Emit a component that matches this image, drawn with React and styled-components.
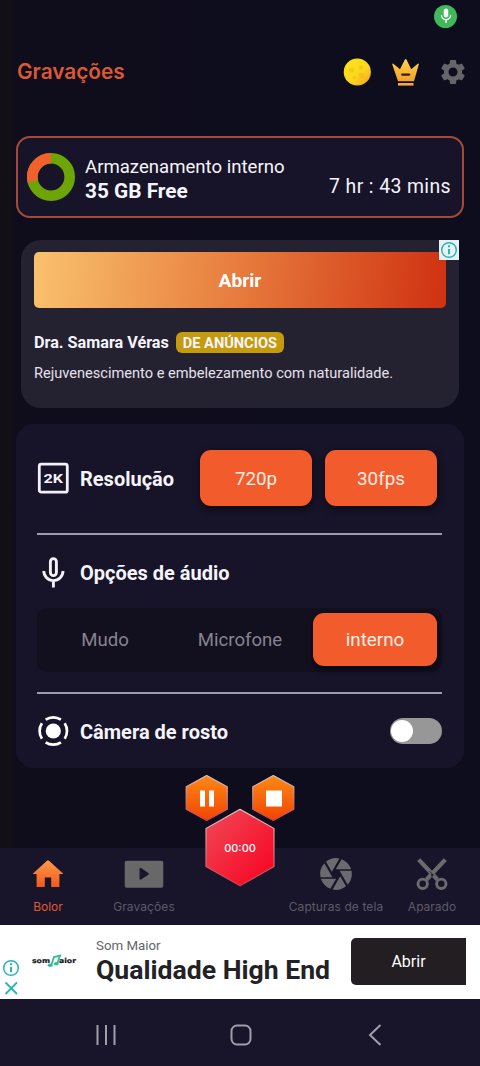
import React from "react";
import styled, { createGlobalStyle } from "styled-components";
import { MdSettings, MdMic, MdCamera } from "react-icons/md";

const Global = createGlobalStyle`
  * { box-sizing: border-box; }
  body { margin: 0; background: #0f0d1c; }
  button { border: 0; padding: 0; font: inherit; color: inherit; background: none; }
`;

const Screen = styled.div`
  width: 480px;
  height: 1066px;
  display: flex;
  flex-direction: column;
  overflow: hidden;
  color: #f6f4fb;
  background: linear-gradient(90deg, #120f17 0, #120f17 10px, #0f0d1c 18px, #0e0d1d 100%);
  font-family: Roboto, "Liberation Sans", sans-serif;
`;

const StatusBar = styled.div`
  height: 32px;
  display: flex;
  justify-content: flex-end;
  align-items: center;
  padding-right: 23px;
`;

const MicBadge = styled.span`
  width: 23px;
  height: 23px;
  border-radius: 50%;
  display: flex;
  align-items: center;
  justify-content: center;
  background: #40b95a;
  color: #fff;
`;

const Header = styled.header`
  height: 80px;
  display: flex;
  align-items: center;
  justify-content: space-between;
  padding: 0 12px 0 17px;
`;

const Title = styled.h1`
  margin: 0;
  font: 600 20.8px/28px Inter, "Liberation Sans", sans-serif;
  color: #db5932;
`;

const HeaderActions = styled.div`
  display: flex;
  align-items: center;
  gap: 18px;
  svg { display: block; }
`;

const StorageCard = styled.section`
  height: 82px;
  margin: 24px 16px 0;
  padding: 0 11px 0 9px;
  border: 2px solid #a54a38;
  border-radius: 14px;
  background: #171429;
  display: flex;
  align-items: center;
`;

const StorageText = styled.div`
  flex: 1;
  margin-left: 10px;
  padding-top: 3px;
  font-size: 18.6px;
  line-height: 24px;
  white-space: nowrap;
  strong { display: block; font-size: 20.8px; }
`;

const TimeLeft = styled.div`
  padding-top: 19px;
  font-size: 19.4px;
  letter-spacing: 0.4px;
  white-space: nowrap;
`;

const AdCard = styled.section`
  position: relative;
  height: 168px;
  margin: 22px 21px 0;
  padding: 12px 13px;
  border-radius: 20px;
  background: #242131;
`;

const AdButton = styled.button`
  display: block;
  width: 100%;
  height: 56px;
  padding-top: 1px;
  border-radius: 5px;
  background: linear-gradient(97deg, #f9c26d 0%, #e77b3d 50%, #d03413 98%);
  font-size: 19.2px;
  font-weight: 700;
  color: #fff;
`;

const AdTitle = styled.div`
  display: flex;
  align-items: center;
  gap: 7px;
  height: 20px;
  margin-top: 24px;
  font-size: 16.2px;
  font-weight: 700;
  white-space: nowrap;
`;

const AdTag = styled.span`
  width: 108px;
  height: 21px;
  line-height: 22px;
  border-radius: 6px;
  background: #c59a0c;
  text-align: center;
  font-size: 14.6px;
`;

const AdText = styled.p`
  margin: 11px 0 0;
  font-size: 14.6px;
  line-height: 20px;
  color: #e4e1ec;
  white-space: nowrap;
`;

const AdCorner = styled.span`
  position: absolute;
  top: 0;
  right: 0;
  width: 20px;
  height: 20px;
  background: #e9f2f3;
  svg { display: block; }
`;

const Settings = styled.section`
  height: 344px;
  margin: 16px 16px 0;
  padding: 26px 22px 0 21px;
  border-radius: 18px;
  background: #171328;
`;

const SettingRow = styled.div`
  display: flex;
  align-items: center;
  height: ${(p) => p.$height}px;
`;

const IconSlot = styled.span`
  width: 32px;
  margin-right: 11px;
  flex: none;
  display: flex;
  justify-content: center;
  svg { display: block; flex: none; }
`;

const Label = styled.span`
  flex: 1;
  padding-top: 2px;
  font-size: 20px;
  font-weight: 700;
  white-space: nowrap;
`;

const Choice = styled.button`
  width: ${(p) => p.$width}px;
  height: ${(p) => p.$height}px;
  margin-right: ${(p) => p.$gap}px;
  padding-top: 2px;
  flex: none;
  border-radius: 11px;
  background: #f25c2d;
  color: #ffeee6;
  font-size: 18.8px;
  box-shadow: 1px 3px 7px rgba(0, 0, 0, 0.55);
`;

const Divider = styled.hr`
  height: 2px;
  margin: ${(p) => p.$top}px 0 0;
  border: 0;
  background: #a09ab0;
`;

const Segments = styled.div`
  height: 64px;
  display: flex;
  align-items: center;
  padding-bottom: 2px;
  border-radius: 10px;
  background: #120f1f;
  ${Choice} { margin-left: auto; }
`;

const Segment = styled.button`
  width: ${(p) => p.$width}px;
  flex: none;
  padding-top: 2px;
  font-size: 18.6px;
  color: #87838f;
`;

const Toggle = styled.span`
  width: 52px;
  height: 26px;
  padding: 2px 1px;
  border-radius: 13px;
  background: #979797;
  &::before {
    content: "";
    display: block;
    width: 22px;
    height: 22px;
    border-radius: 50%;
    background: #fff;
  }
`;

const Nav = styled.nav`
  position: relative;
  height: 77px;
  margin-top: 80px;
  display: grid;
  grid-template-columns: repeat(5, 96px);
  background: #181429;
`;

const NavItem = styled.div`
  display: flex;
  flex-direction: column;
  align-items: center;
  padding-top: 9px;
  font: 400 12px/16px Inter, "Liberation Sans", sans-serif;
  letter-spacing: ${(p) => p.$spacing || 0}px;
  white-space: nowrap;
  color: ${(p) => (p.$active ? "#e2582f" : "#5d5a68")};
`;

const NavIcon = styled.span`
  height: 34px;
  margin-bottom: 8px;
  display: flex;
  align-items: center;
  color: #6b6a6f;
  svg { display: block; flex: none; }
`;

const Recorder = styled.div`
  position: absolute;
  left: 184px;
  top: -75px;
  width: 112px;
  height: 114px;
  svg { display: block; }
`;

const Timer = styled.span`
  position: absolute;
  left: 0;
  right: 0;
  top: 67px;
  text-align: center;
  font: 500 11px/16px Inter, sans-serif;
  color: #fff;
`;

const Banner = styled.section`
  height: 74px;
  display: flex;
  align-items: center;
  background: #fff;
  color: #25222a;
`;

const BannerMarks = styled.div`
  width: 22px;
  height: 74px;
  padding: 33px 0 0 1px;
  svg { display: block; }
`;

const BannerLogo = styled.div`
  width: 74px;
  padding: 0 0 2px 9px;
  svg { display: block; }
`;

const BannerText = styled.div`
  flex: 1;
  padding-bottom: 2px;
  white-space: nowrap;
  font-size: 13.3px;
  line-height: 18px;
  color: #66636a;
  strong {
    display: block;
    font-size: 26.6px;
    line-height: 30px;
    color: #222126;
  }
`;

const BannerButton = styled.button`
  width: 115px;
  height: 47px;
  margin: 0 14px 1px 0;
  border-radius: 5px 0 0 5px;
  background: #231e21;
  color: #fff;
  font-size: 16px;
`;

const SystemBar = styled.footer`
  flex: 1;
  display: flex;
  align-items: center;
  justify-content: space-between;
  padding: 4px 94px 0 95px;
  background: #181429;
  svg { display: block; }
`;

const Stroke = ({ w, h, color = "currentColor", width = 2, children }) => (
  <svg width={w} height={h} viewBox={`0 0 ${w} ${h}`} fill="none" stroke={color} strokeWidth={width}>
    {children}
  </svg>
);

const InfoIcon = () => (
  <svg width="20" height="20" viewBox="0 0 20 20">
    <circle cx="10" cy="10" r="7.3" fill="none" stroke="#29b5b8" strokeWidth="1.5" />
    <path d="M10 9v5.2M10 5.3v2" stroke="#29b5b8" strokeWidth="2" />
  </svg>
);

const Coin = () => (
  <svg width="30" height="28" viewBox="-1 0 30 28">
    <defs>
      <linearGradient id="coin" x1="0" y1="0" x2="1" y2="1">
        <stop offset="0" stopColor="#ffe715" />
        <stop offset=".6" stopColor="#fad51e" />
        <stop offset="1" stopColor="#f39a1c" />
      </linearGradient>
    </defs>
    <circle cx="14.3" cy="14" r="13.6" fill="url(#coin)" />
    <g fill="#e3a81c" opacity=".3">
      <circle cx="8.5" cy="12" r="2.6" />
      <circle cx="18" cy="9.5" r="2.2" />
      <circle cx="18.500" cy="17.500" r="2.800" />
      <circle cx="11.500" cy="19.500" r="1.800" />
    </g>
  </svg>
);

const Crown = () => (
  <svg width="30" height="30" viewBox="0 0 30 30">
    <defs>
      <linearGradient id="crown" x1="0" y1="0" x2="0" y2="1">
        <stop offset="0" stopColor="#fed546" />
        <stop offset="1" stopColor="#f3a02c" />
      </linearGradient>
    </defs>
    <path
      d="M2.3 7.5q-.2-1.3 1-.8L10 12.3 14.9 2.6q.8-1.4 1.6 0l4.7 9.7L27.8 6.700q1.200-.5 1 .8L24 24.200H8z"
      fill="url(#crown)"
    />
    <path d="M8 26h15.500v2.600H8z" fill="#f3ac3c" />
    <path d="M12.200 17.600h7" stroke="#33220d" strokeWidth="2.200" strokeLinecap="round" />
  </svg>
);

const Donut = () => (
  <svg width="48" height="48" viewBox="0 0 48 48" fill="none" strokeWidth="10.6">
    <circle cx="24" cy="24" r="18.7" stroke="#6ca505" />
    <path d="M5.8 28.2A18.7 18.7 0 0 1 24 5.3" stroke="#f0612c" />
  </svg>
);

const Icon2K = () => (
  <svg width="32" height="32" viewBox="0 0 32 32">
    <rect x="2.3" y="2.2" width="28" height="28" rx="2" fill="none" stroke="#f3f0fa" strokeWidth="2.8" />
    <text x="6.500" y="21.200" textLength="19.500" lengthAdjust="spacingAndGlyphs" fontFamily="Roboto" fontWeight="700" fontSize="13.500" fill="#f3f0fa">
      2K
    </text>
  </svg>
);

const Microphone = () => (
  <Stroke w={32} h={32} color="#f3f0fa" width={2.9}>
    <rect x="13.400" y="2.600" width="6" height="17" rx="3" />
    <path d="M6.800 15a9.600 9.600 0 0 0 19.200 0M16.400 24.500v7" />
  </Stroke>
);

const FaceCam = () => (
  <svg width="32" height="32" viewBox="0 0 32 32">
    <circle cx="16.3" cy="16" r="7.6" fill="#fff" />
    <circle
      cx="16.3"
      cy="16"
      r="13.7"
      fill="none"
      stroke="#fff"
      strokeWidth="2.7"
      pathLength="360"
      strokeDasharray="68 22"
      strokeDashoffset="34"
    />
  </svg>
);

const House = () => (
  <svg width="32" height="34" viewBox="0 0 32 34">
    <defs>
      <linearGradient id="house" x1="0" y1="0" x2="0" y2="1">
        <stop offset="0" stopColor="#ff9a4a" />
        <stop offset="1" stopColor="#f4581b" />
      </linearGradient>
    </defs>
    <path d="M16 3.3q.5 0 1 .5L31 16.4q.4.5-.2.5H27.4V30h-8.2v-9.4h-6.4V30H4.6V16.9H1.2q-.6 0-.2-.5L15 3.8q.5-.5 1-.5z" fill="url(#house)" />
  </svg>
);

const VideoBox = () => (
  <svg width="40" height="34" viewBox="0 0 40 34">
    <rect x=".7" y="3.8" width="38.6" height="27" rx="2" fill="#696869" />
    <path d="M15.5 11.8q.3-1.3 1.6-.7l7.3 4.8q.9.9 0 1.8l-7.3 4.9q-1.3.6-1.600-.8z" fill="#1a162a" />
  </svg>
);

const Scissors = () => (
  <svg width="32" height="34" viewBox="0 0 32 34" fill="none" stroke="currentColor">
    <path d="M2.700 2.600L21.400 22.500M29.300 2.600L10.600 22.500" strokeWidth="4.200" />
    <circle cx="6.700" cy="26.800" r="4.700" strokeWidth="2.900" />
    <circle cx="25.300" cy="26.800" r="4.700" strokeWidth="2.900" />
    <path d="M16 17v2.400" stroke="#181429" strokeWidth="1.600" />
    <path d="M13.500 14.200L18 18.700" stroke="#181429" strokeWidth=".8" />
  </svg>
);

const hexPath = (cx, cy, rx, ry) =>
  `M${cx} ${cy - ry}L${cx + rx} ${cy - ry / 2}V${cy + ry / 2}L${cx} ${cy + ry}L${cx - rx} ${cy + ry / 2}V${cy - ry / 2}Z`;

const HexButtons = () => (
  <svg width="112" height="114" viewBox="0 0 112 114">
    <defs>
      <linearGradient id="hexOrange" x1="0" y1="0" x2="0" y2="1">
        <stop offset="0" stopColor="#fb8a17" />
        <stop offset="1" stopColor="#f34400" />
      </linearGradient>
      <linearGradient id="hexRed" x1="0" y1="0" x2="1" y2="1">
        <stop offset="0" stopColor="#f04a58" />
        <stop offset="1" stopColor="#f7001f" />
      </linearGradient>
      <linearGradient id="rim" x1="0" y1="0" x2="0" y2="1">
        <stop offset="0" stopColor="#dfc3c8" />
        <stop offset="1" stopColor="#c8404a" />
      </linearGradient>
    </defs>
    <g strokeWidth="1.2" strokeLinejoin="round" stroke="url(#rim)">
      <path d={hexPath(22.7, 25, 20.5, 22.5)} fill="url(#hexOrange)" />
      <path d={hexPath(89.3, 25, 20.5, 22.5)} fill="url(#hexOrange)" />
      <path d={hexPath(56, 74.5, 34, 38.2)} fill="url(#hexRed)" />
    </g>
    <path d="M16 17.500h5v16h-5zM25 17.500h5v16h-5zM82 17.500h16v16H82z" fill="#fff" />
  </svg>
);

const SomMaior = () => (
  <svg width="46" height="18" viewBox="0 0 46 18">
    <g fontFamily="DejaVu Sans" fontWeight="700" fontSize="6.8" fill="#17171b" stroke="#17171b" strokeWidth=".2">
      <text x="1" y="10.500" textLength="18" lengthAdjust="spacingAndGlyphs">som</text>
      <text x="28" y="10.500" textLength="17" lengthAdjust="spacingAndGlyphs">aior</text>
    </g>
    <path d="M20.500 12.500L23 5l6-1.500-2.500 7.500" fill="none" stroke="#35bd98" strokeWidth="1.900" />
    <ellipse cx="19.200" cy="13.300" rx="2.700" ry="1.700" fill="#35bd98" />
    <ellipse cx="25.200" cy="11.800" rx="2.500" ry="1.700" fill="#35bd98" />
  </svg>
);

export default function App() {
  return (
    <Screen>
      <Global />
      <StatusBar>
        <MicBadge><MdMic size={18} /></MicBadge>
      </StatusBar>
      <Header>
        <Title>Gravações</Title>
        <HeaderActions>
          <Coin />
          <Crown />
          <MdSettings size={30} color="#656469" />
        </HeaderActions>
      </Header>

      <StorageCard>
        <Donut />
        <StorageText>
          Armazenamento interno
          <strong>35 GB Free</strong>
        </StorageText>
        <TimeLeft>7 hr : 43 mins</TimeLeft>
      </StorageCard>

      <AdCard>
        <AdButton>Abrir</AdButton>
        <AdTitle>
          Dra. Samara Véras
          <AdTag>DE ANÚNCIOS</AdTag>
        </AdTitle>
        <AdText>Rejuvenescimento e embelezamento com naturalidade.</AdText>
        <AdCorner><InfoIcon /></AdCorner>
      </AdCard>

      <Settings>
        <SettingRow $height={56}>
          <IconSlot><Icon2K /></IconSlot>
          <Label>Resolução</Label>
          <Choice $width={112} $height={56} $gap={13}>720p</Choice>
          <Choice $width={112} $height={56} $gap={5}>30fps</Choice>
        </SettingRow>
        <Divider $top={27} />
        <SettingRow $height={73}>
          <IconSlot><Microphone /></IconSlot>
          <Label>Opções de áudio</Label>
        </SettingRow>
        <Segments>
          <Segment $width={136}>Mudo</Segment>
          <Segment $width={134}>Microfone</Segment>
          <Choice $width={124} $height={53} $gap={5}>interno</Choice>
        </Segments>
        <Divider $top={20} />
        <SettingRow $height={74}>
          <IconSlot><FaceCam /></IconSlot>
          <Label>Câmera de rosto</Label>
          <Toggle />
        </SettingRow>
      </Settings>

      <Nav>
        <NavItem $active><NavIcon><House /></NavIcon>Bolor</NavItem>
        <NavItem $spacing={0.1}><NavIcon><VideoBox /></NavIcon>Gravações</NavItem>
        <span />
        <NavItem $spacing={0.1}><NavIcon><MdCamera size={38} /></NavIcon>Capturas de tela</NavItem>
        <NavItem><NavIcon><Scissors /></NavIcon>Aparado</NavItem>
        <Recorder>
          <HexButtons />
          <Timer>00:00</Timer>
        </Recorder>
      </Nav>

      <Banner>
        <BannerMarks>
          <InfoIcon />
          <Stroke w={20} h={20} color="#29b5b8" width={1.8}>
            <path d="M4.500 4.500L16 16M16 4.500L4.500 16" />
          </Stroke>
        </BannerMarks>
        <BannerLogo><SomMaior /></BannerLogo>
        <BannerText>
          Som Maior
          <strong>Qualidade High End</strong>
        </BannerText>
        <BannerButton>Abrir</BannerButton>
      </Banner>

      <SystemBar>
        <Stroke w={22} h={22} color="#a19eac"><path d="M2.500 1v20M11 1v20M19.500 1v20" /></Stroke>
        <Stroke w={22} h={22} color="#a19eac"><rect x="1.500" y="1.500" width="19" height="19" rx="5.500" /></Stroke>
        <Stroke w={22} h={22} color="#a19eac"><path d="M16.500 1L6 11l10.500 10" /></Stroke>
      </SystemBar>
    </Screen>
  );
}
